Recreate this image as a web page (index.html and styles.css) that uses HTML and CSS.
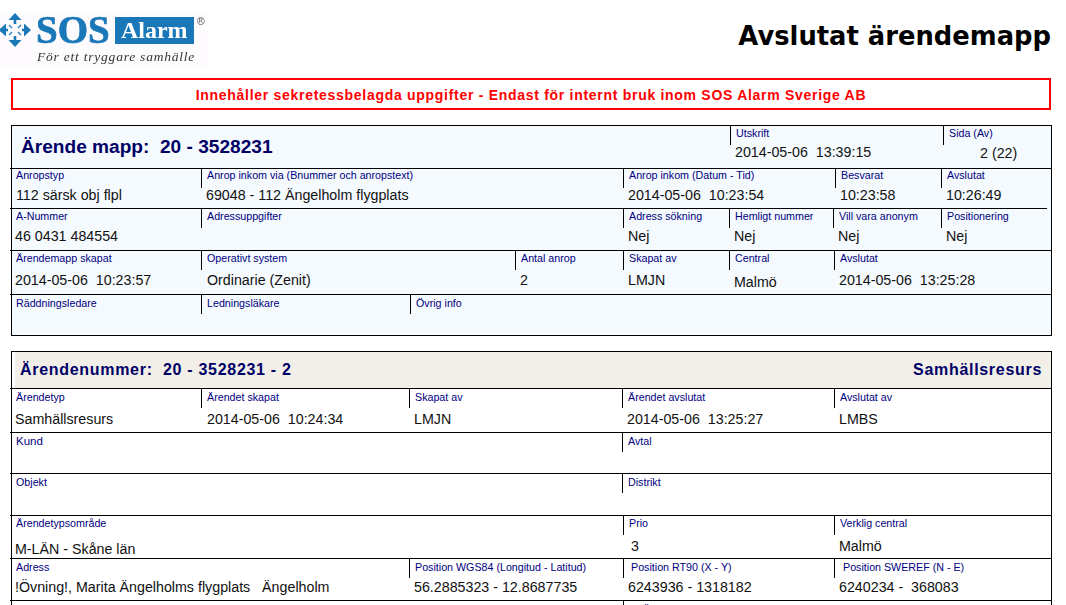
FILE: index.html
```html
<!DOCTYPE html>
<html lang="sv">
<head>
<meta charset="utf-8">
<title>Avslutat ärendemapp</title>
<link rel="stylesheet" href="styles.css">
</head>
<body>
<div class="page">
  <header class="top">
    <div class="logo">
      <div class="logo-main">
        <svg class="logo-icon" width="31" height="34" viewBox="0 0 31 34" aria-hidden="true">
          <g fill="#1b78b8">
            <path d="M15 0L21.5 7H8.5Z"/><path d="M15 34L8.5 27H21.5Z"/>
            <path d="M31 17L24 10.5V23.5Z"/><path d="M-1 17L6 10.5V23.5Z"/>
          </g>
          <path d="M15 6V11M15 23V28M0 17H8M22 17H26" stroke="#1b78b8" stroke-width="2.6" fill="none"/>
          <path d="M9 12L12 15M21 12L18 15M9 22L12 19M21 22L18 19" stroke="#3d8cc6" stroke-width="1.6" fill="none"/>
        </svg>
        <span class="logo-sos">SOS</span>
        <span class="logo-alarm">Alarm</span>
        <span class="logo-reg">®</span>
      </div>
      <div class="logo-tag">För ett tryggare samhälle</div>
    </div>
    <h1 class="doc-title">Avslutat ärendemapp</h1>
  </header>

  <div class="notice">Innehåller sekretessbelagda uppgifter - Endast för internt bruk inom SOS Alarm Sverige AB</div>

  <section class="card card-blue">
    <div class="row r-head c-head l-up1">
      <div class="case-title">Ärende mapp:&nbsp; 20 - 3528231</div>
      <div class="cell"><div class="label">Utskrift</div><div class="value v-up">2014-05-06&nbsp; 13:39:15</div></div>
      <div class="cell"><div class="label">Sida (Av)</div><div class="value v-page">2 (22)</div></div>
    </div>
    <div class="row r-40 c-1 l-up2">
      <div class="cell"><div class="label">Anropstyp</div><div class="value v-first">112 särsk obj flpl</div></div>
      <div class="cell"><div class="label">Anrop inkom via (Bnummer och anropstext)</div><div class="value">69048 - 112 Ängelholm flygplats</div></div>
      <div class="cell"><div class="label">Anrop inkom (Datum - Tid)</div><div class="value">2014-05-06&nbsp; 10:23:54</div></div>
      <div class="cell"><div class="label">Besvarat</div><div class="value">10:23:58</div></div>
      <div class="cell"><div class="label">Avslutat</div><div class="value">10:26:49</div></div>
    </div>
    <div class="row r-42 c-2 short l-up1">
      <div class="cell"><div class="label">A-Nummer</div><div class="value">46 0431 484554</div></div>
      <div class="cell"><div class="label">Adressuppgifter</div></div>
      <div class="cell"><div class="label">Adress sökning</div><div class="value">Nej</div></div>
      <div class="cell"><div class="label">Hemligt nummer</div><div class="value">Nej</div></div>
      <div class="cell"><div class="label">Vill vara anonym</div><div class="value">Nej</div></div>
      <div class="cell"><div class="label">Positionering</div><div class="value">Nej</div></div>
    </div>
    <div class="row r-44 c-3 l-up1">
      <div class="cell"><div class="label">Ärendemapp skapat</div><div class="value">2014-05-06&nbsp; 10:23:57</div></div>
      <div class="cell"><div class="label">Operativt system</div><div class="value v-in">Ordinarie (Zenit)</div></div>
      <div class="cell"><div class="label">Antal anrop</div><div class="value">2</div></div>
      <div class="cell"><div class="label">Skapat av</div><div class="value">LMJN</div></div>
      <div class="cell"><div class="label">Central</div><div class="value v-down">Malmö</div></div>
      <div class="cell"><div class="label">Avslutat</div><div class="value">2014-05-06&nbsp; 13:25:28</div></div>
    </div>
    <div class="row r-40 c-4">
      <div class="cell"><div class="label">Räddningsledare</div></div>
      <div class="cell"><div class="label">Ledningsläkare</div></div>
      <div class="cell"><div class="label">Övrig info</div></div>
    </div>
  </section>

  <section class="card card-white">
    <div class="case-band">
      <div class="case-sub">Ärendenummer:&nbsp; 20 - 3528231 - 2</div>
      <div class="case-sub">Samhällsresurs</div>
    </div>
    <div class="row r-44 r-low c-5">
      <div class="cell"><div class="label">Ärendetyp</div><div class="value">Samhällsresurs</div></div>
      <div class="cell"><div class="label">Ärendet skapat</div><div class="value v-in">2014-05-06&nbsp; 10:24:34</div></div>
      <div class="cell"><div class="label">Skapat av</div><div class="value">LMJN</div></div>
      <div class="cell"><div class="label">Ärendet avslutat</div><div class="value">2014-05-06&nbsp; 13:25:27</div></div>
      <div class="cell"><div class="label">Avslutat av</div><div class="value">LMBS</div></div>
    </div>
    <div class="row r-41 c-6">
      <div class="cell"><div class="label label-big">Kund</div></div>
      <div class="cell"><div class="label">Avtal</div></div>
    </div>
    <div class="row r-42 c-6">
      <div class="cell"><div class="label">Objekt</div></div>
      <div class="cell"><div class="label">Distrikt</div></div>
    </div>
    <div class="row r-43 c-7 l-up1">
      <div class="cell"><div class="label">Ärendetypsområde</div><div class="value v-low">M-LÄN - Skåne län</div></div>
      <div class="cell"><div class="label">Prio</div><div class="value v-prio">3</div></div>
      <div class="cell"><div class="label">Verklig central</div><div class="value">Malmö</div></div>
    </div>
    <div class="row r-42 c-8 tight">
      <div class="cell"><div class="label">Adress</div><div class="value">!Övning!, Marita Ängelholms flygplats&nbsp;&nbsp; Ängelholm</div></div>
      <div class="cell"><div class="label">Position WGS84 (Longitud - Latitud)</div><div class="value">56.2885323 - 12.8687735</div></div>
      <div class="cell"><div class="label label-in">Position RT90 (X - Y)</div><div class="value">6243936 - 1318182</div></div>
      <div class="cell"><div class="label label-in2">Position SWEREF (N - E)</div><div class="value">6240234 -&nbsp; 368083</div></div>
    </div>
    <div class="row r-42 c-9">
      <div class="cell"></div>
      <div class="cell"><div class="label label-last">Ärendestatus ändrad</div></div>
    </div>
  </section>
</div>
</body>
</html>
```

FILE: styles.css
```css
* { box-sizing: border-box; }
html, body { margin: 0; height: 605px; overflow: hidden; background: #fff; }
body { font-family: "Liberation Sans", Arial, sans-serif; color: #111; }

.page { width: 1052px; padding-left: 11px; }

/* Header */
.top { display: flex; justify-content: space-between; height: 78px; margin-left: -11px; }
.logo { width: 208px; height: 52px; margin-top: 14px; background: #fdfbfd; filter: blur(0.35px); }
.logo-main { display: flex; align-items: center; height: 32px; }
.logo-icon { flex: none; }
.logo-sos { font: bold 39px/32px "Liberation Serif", serif; color: #1b78b8; margin-left: 5px; -webkit-text-stroke: 0.7px #1b78b8; }
.logo-alarm { font: bold 24px/26px "Liberation Serif", serif; color: #fff; background: #1b78b8; width: 79px; height: 27px; margin-left: 5px; text-align: center; }
.logo-reg { font: 11px/11px "Liberation Sans", sans-serif; color: #555; margin: -18px 0 0 3px; }
.logo-tag { font: italic 13.5px/17px "Liberation Serif", serif; color: #333; padding: 2px 0 0 37px; letter-spacing: 0.78px; }
.doc-title { margin: 19px 1px 0 0; font: bold 25.8px/34px "DejaVu Sans", sans-serif; color: #000; }

/* Notice */
.notice { height: 32px; border: 2px solid #f00; color: #f00; text-align: center; font: bold 14px/31px "Liberation Sans", sans-serif; letter-spacing: 0.71px; margin-bottom: 15px; width: 1040px; }

/* Cards */
.card { width: 1041px; border: 1px solid #000; border-bottom: 0; }
.card-blue { background: #f5faff; height: 211px; border-bottom: 1px solid #000; margin-bottom: 15px; }
.card-white { background: #fff; height: 260px; }

.row { display: grid; border-top: 1px solid #000; margin: 0 -1px 0 -2px; padding-left: 1px; }
.r-head { border-top: 0; height: 42px; margin: 0; padding: 0; }
.r-40 { height: 40px; --gap: -1px; }
.r-41 { height: 41px; --gap: 0px; }
.r-42 { height: 42px; --gap: 0px; }
.r-43 { height: 43px; --gap: 3px; }
.r-44 { height: 44px; --gap: 2px; }
.r-low { --gap: 3px; }
.tight { --gap: 1px; }
.short { margin-right: 4px; }

.c-head { grid-template-columns: 718px 213px 1fr; }
.c-1 { grid-template-columns: 190px 422px 212px 106px 1fr; }
.c-2 { grid-template-columns: 190px 422px 106px 104px 108px 1fr; }
.c-3 { grid-template-columns: 190px 314px 108px 106px 105px 1fr; }
.c-4 { grid-template-columns: 190px 209px 1fr; }
.c-5 { grid-template-columns: 190px 208px 213px 212px 1fr; }
.c-6 { grid-template-columns: 611px 1fr; }
.c-7 { grid-template-columns: 612px 211px 1fr; }
.c-8 { grid-template-columns: 398px 214px 211px 1fr; }
.c-9 { grid-template-columns: 612px 1fr; }

.cell { min-width: 0; }
.label { height: 19px; padding: 1px 0 0 5px; font-size: 10.7px; line-height: 14px; color: #000080; white-space: nowrap; border-left: 1px solid #000; }
.cell:first-child > .label { border-left-color: transparent; padding-left: 4px; }
.l-up1 .label { padding-top: 0; }
.l-up2 .label { padding-top: 0; line-height: 12px; }
.label-big { font-size: 11.5px; }
.label-in { padding-left: 7px; }
.label-in2 { padding-left: 8px; }
.label-last { padding-left: 19px; }
.value { margin-top: var(--gap, 0px); padding-left: 5px; font-size: 14.25px; line-height: 17px; white-space: nowrap; color: #111; }
.cell:first-child > .value { padding-left: 4px; }
.cell:first-child > .v-first { padding-left: 5px; }
.v-in { padding-left: 6px; }
.v-up { margin-top: -1px; }
.v-down { margin-top: calc(var(--gap, 0px) + 2px); }
.v-low { margin-top: calc(var(--gap, 0px) + 3px); }
.v-page { padding-left: 37px; }
.v-prio { padding-left: 8px; }

.case-title { padding: 9px 0 0 9px; font-weight: bold; font-size: 19.1px; line-height: 24px; color: #000066; }
.case-band { display: flex; justify-content: space-between; align-items: center; height: 36px; margin-left: 3px; background: #f2efe9; padding: 0 9px 0 5px; }
.case-sub { font-weight: bold; font-size: 16px; line-height: 20px; letter-spacing: 0.7px; color: #000066; }
```
